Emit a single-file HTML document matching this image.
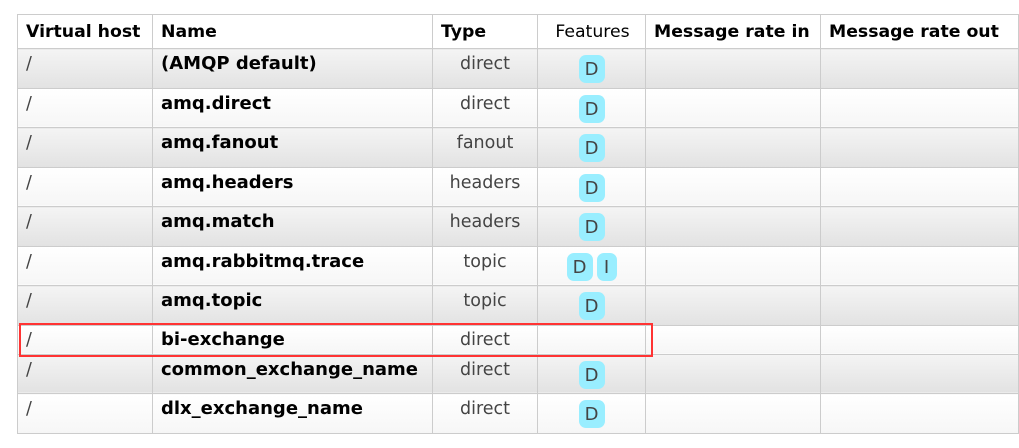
<!DOCTYPE html>
<html><head><meta charset="utf-8"><style>
body{margin:0;background:#fff;width:1019px;height:448px;position:relative;overflow:hidden;font-family:"DejaVu Sans","Liberation Sans",sans-serif;}
table{position:absolute;left:17px;top:14px;border-collapse:collapse;table-layout:fixed;width:1001px;}
td,th{border:1px solid #ccc;padding:0 8px;vertical-align:top;font-size:17.5px;line-height:20px;overflow:hidden;white-space:nowrap}
th{height:34px;text-align:left;font-weight:bold;vertical-align:middle;color:#000;background:#fff;font-size:17.3px;padding:0 6px 0 8px;box-sizing:border-box}
th.f{font-weight:normal;text-align:center;font-size:17.3px}
tr.o td{background:linear-gradient(#f4f4f4,#e2e2e2);}
tr.e td{background:linear-gradient(#fff,#f6f6f6);}
td{height:39.5px;padding-top:5px;box-sizing:border-box;color:#444}
tr.s td{height:29px;padding-top:4px}
td.n{font-weight:bold;color:#000;font-size:18px;padding-left:8px}
td.t{text-align:center;}
td.c{text-align:center;padding-top:6px;font-size:18px}
.b{display:inline-block;background:#99eeff;border-radius:7px;width:26px;height:28px;line-height:30px;text-align:center;color:#444;margin:0 2px}
.red{position:absolute;left:19px;top:323px;width:630px;height:30px;border:2px solid #f33;}
</style></head><body>
<table>
<colgroup><col style="width:135px"><col style="width:280px"><col style="width:105px"><col style="width:108px"><col style="width:175px"><col style="width:198px"></colgroup>
<tr><th>Virtual host</th><th>Name</th><th>Type</th><th class="f">Features</th><th>Message rate in</th><th>Message rate out</th></tr>
<tr class="o"><td>/</td><td class="n">(AMQP default)</td><td class="t">direct</td><td class="c"><span class="b">D</span></td><td></td><td></td></tr>
<tr class="e"><td>/</td><td class="n">amq.direct</td><td class="t">direct</td><td class="c"><span class="b">D</span></td><td></td><td></td></tr>
<tr class="o"><td>/</td><td class="n">amq.fanout</td><td class="t">fanout</td><td class="c"><span class="b">D</span></td><td></td><td></td></tr>
<tr class="e"><td>/</td><td class="n">amq.headers</td><td class="t">headers</td><td class="c"><span class="b">D</span></td><td></td><td></td></tr>
<tr class="o"><td>/</td><td class="n">amq.match</td><td class="t">headers</td><td class="c"><span class="b">D</span></td><td></td><td></td></tr>
<tr class="e"><td>/</td><td class="n">amq.rabbitmq.trace</td><td class="t">topic</td><td class="c"><span class="b">D</span><span class="b" style="width:20px">I</span></td><td></td><td></td></tr>
<tr class="o"><td>/</td><td class="n">amq.topic</td><td class="t">topic</td><td class="c"><span class="b">D</span></td><td></td><td></td></tr>
<tr class="e s"><td>/</td><td class="n">bi-exchange</td><td class="t">direct</td><td></td><td></td><td></td></tr>
<tr class="o"><td>/</td><td class="n">common_exchange_name</td><td class="t">direct</td><td class="c"><span class="b">D</span></td><td></td><td></td></tr>
<tr class="e"><td>/</td><td class="n">dlx_exchange_name</td><td class="t">direct</td><td class="c"><span class="b">D</span></td><td></td><td></td></tr>
</table>
<div class="red"></div>
</body></html>
